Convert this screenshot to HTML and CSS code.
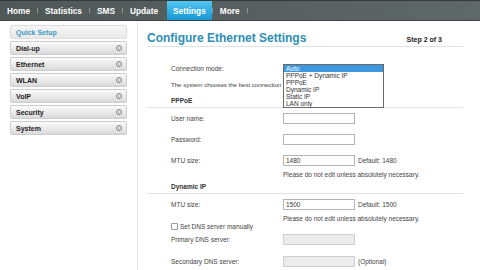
FILE: index.html
```html
<!DOCTYPE html>
<html lang="en">
<head>
    <meta charset="UTF-8">
    <title>Configure Ethernet Settings</title>
    <link rel="stylesheet" href="styles.css">
</head>
<body>

    <!-- Top Navigation -->
    <nav class="topnav">
        <a class="tab" href="#">Home</a><span class="sep"></span>
        <a class="tab" href="#">Statistics</a><span class="sep"></span>
        <a class="tab" href="#">SMS</a><span class="sep"></span>
        <a class="tab" href="#">Update</a>
        <a class="tab active" href="#">Settings</a><span class="sep"></span>
        <a class="tab" href="#">More</a><span class="sep"></span>
    </nav>

    <div class="page">
        <!-- Side Menu -->
        <aside class="sidebar">
            <a class="side-item current" href="#">Quick Setup</a>
            <a class="side-item" href="#">Dial-up <span class="dot"></span></a>
            <a class="side-item" href="#">Ethernet <span class="dot"></span></a>
            <a class="side-item" href="#">WLAN <span class="dot"></span></a>
            <a class="side-item" href="#">VoIP <span class="dot"></span></a>
            <a class="side-item" href="#">Security <span class="dot"></span></a>
            <a class="side-item" href="#">System <span class="dot"></span></a>
        </aside>

        <!-- Main Content -->
        <main class="content">
            <div class="title-bar">
                <h1>Configure Ethernet Settings</h1>
                <span class="step">Step 2 of 3</span>
            </div>

            <form class="settings">
                <div class="row row-mode">
                    <label>Connection mode:</label>
                    <div class="field field-mode">
                        <ul class="mode-list">
                            <li class="selected">Auto</li>
                            <li>PPPoE + Dynamic IP</li>
                            <li>PPPoE</li>
                            <li>Dynamic IP</li>
                            <li>Static IP</li>
                            <li>LAN only</li>
                        </ul>
                    </div>
                </div>
                <div class="row row-desc">
                    <p>The system chooses the best connection</p>
                </div>

                <div class="section">PPPoE</div>
                <div class="row">
                    <label>User name:</label>
                    <input type="text">
                </div>
                <div class="row">
                    <label>Password:</label>
                    <input type="password">
                </div>
                <div class="row row-short">
                    <label>MTU size:</label>
                    <input type="text" value="1480">
                    <span class="note">Default: 1480</span>
                </div>
                <div class="hint">Please do not edit unless absolutely necessary.</div>

                <div class="section">Dynamic IP</div>
                <div class="row row-short">
                    <label>MTU size:</label>
                    <input type="text" value="1500">
                    <span class="note">Default: 1500</span>
                </div>
                <div class="hint hint-small">Please do not edit unless absolutely necessary.</div>
                <div class="check-row">
                    <input type="checkbox" id="dns-manual">
                    <label for="dns-manual">Set DNS server manually</label>
                </div>
                <div class="row row-dns">
                    <label>Primary DNS server:</label>
                    <input type="text" disabled>
                </div>
                <div class="row row-last">
                    <label>Secondary DNS server:</label>
                    <input type="text" disabled>
                    <span class="note">(Optional)</span>
                </div>
            </form>
        </main>
    </div>

</body>
</html>
```

FILE: styles.css
```css
body {
    margin: 0;
    padding: 0;
    width: 480px;
    height: 270px;
    overflow: hidden;
    background-color: #fff;
    font-family: "Liberation Sans", Arial, sans-serif;
    color: #444;
}

/* Top navigation */
.topnav {
    display: flex;
    align-items: center;
    height: 19px;
    border-top: 1px solid #353b3b;
    border-bottom: 1px solid #3b4141;
    background: linear-gradient(90deg, #4f5757, #5f6868);
}

.topnav .tab {
    display: flex;
    align-items: center;
    height: 19px;
    padding: 0 7px;
    color: #fff;
    font-size: 8.3px;
    font-weight: bold;
    text-decoration: none;
}

.topnav .tab.active {
    margin-left: 2px;
    padding: 0 6px;
    background: linear-gradient(#52c6f0, #1597d4);
}

.topnav .sep {
    width: 1px;
    height: 5px;
    background-color: #8e9696;
}

/* Layout */
.page {
    display: flex;
    height: 249px;
}

.sidebar {
    display: flex;
    flex-direction: column;
    gap: 2px;
    width: 117px;
    padding: 4px 10px 0 10px;
    border-right: 1px solid #e6e6e6;
}

.side-item {
    display: flex;
    align-items: center;
    justify-content: space-between;
    height: 12px;
    padding: 0 4px 0 5px;
    border: 1px solid #cdcdcd;
    border-radius: 2px;
    background: linear-gradient(#fbfbfb, #dadada);
    color: #222;
    font-size: 7px;
    font-weight: bold;
    text-decoration: none;
}

.side-item.current {
    background: linear-gradient(#f6f6f6, #e9e9e9);
    border-color: #dcdcdc;
    color: #3a98c0;
}

.side-item .dot {
    width: 4px;
    height: 4px;
    border: 1px solid #8c8c8c;
    border-radius: 50%;
    background-color: #d6d6d6;
}

.content {
    flex: 1;
    padding: 0 17px 0 9px;
}

.title-bar {
    display: flex;
    align-items: baseline;
    justify-content: space-between;
    padding: 10px 21px 1px 0;
    border-bottom: 1px solid #e2e2e2;
}

.title-bar h1 {
    margin: 0;
    font-size: 12px;
    line-height: 14px;
    color: #2d8db5;
}

.title-bar .step {
    font-size: 7px;
    font-weight: bold;
    color: #222;
}

/* Form */
.settings {
    margin: 14px 0 0 0;
    font-size: 6.5px;
}

.row {
    display: flex;
    align-items: center;
    height: 21px;
    padding-left: 24px;
}

.row label {
    width: 112px;
}

.row-mode { height: 14px; }
.row-desc { height: 18px; }
.row-short { height: 20px; }
.row-dns { height: 19px; }
.row-last { height: 24px; }

.row-desc p {
    margin: 0;
    font-size: 6.2px;
    letter-spacing: -0.05px;
}

.row input {
    box-sizing: border-box;
    width: 72px;
    height: 11px;
    margin: 0;
    padding: 0 2px;
    border: 1px solid #b4b4b4;
    font-family: inherit;
    font-size: 6.5px;
    color: #333;
}

.row input:disabled {
    background-color: #ececec;
    border-color: #cfcfcf;
}

.note {
    margin-left: 3px;
}

.field-mode {
    position: relative;
    align-self: stretch;
}

.mode-list {
    position: absolute;
    top: 3px;
    left: 0;
    z-index: 2;
    width: 99px;
    margin: 0;
    padding: 0;
    list-style: none;
    border: 1px solid #6a6a6a;
    background-color: #fff;
    color: #333;
    line-height: 7px;
}

.mode-list li {
    padding-left: 2px;
}

.mode-list li.selected {
    background-color: #3f98de;
    color: #fff;
}

.section {
    display: flex;
    align-items: center;
    height: 14px;
    padding-left: 24px;
    border-bottom: 1px solid #e2e2e2;
    font-weight: bold;
    color: #333;
}

.hint {
    display: flex;
    align-items: center;
    height: 9px;
    padding-left: 136px;
}

.hint-small { height: 8px; }

.check-row {
    display: flex;
    align-items: center;
    height: 8px;
    padding-left: 24px;
}

.check-row input {
    appearance: none;
    width: 7px;
    height: 7px;
    margin: 0 2px 0 0;
    border: 1px solid #9a9a9a;
    border-radius: 1px;
    background-color: #fff;
}
```
